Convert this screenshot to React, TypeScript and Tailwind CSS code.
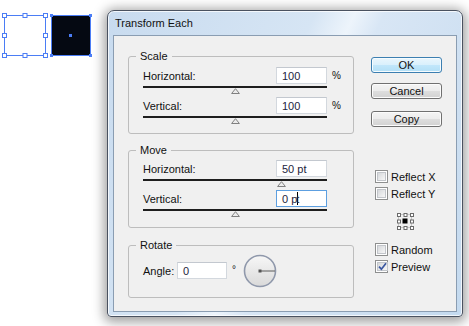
import React from "react";

function Input({
  w,
  children,
  focused,
}: {
  w: string;
  children: React.ReactNode;
  focused?: boolean;
}) {
  return (
    <div
      className={
        "h-[17px] bg-white border flex items-center pl-[5px] text-[#1d1d3d] " +
        w +
        (focused ? " border-[#5d9fe0]" : " border-[#d3d8de] border-t-[#c3c8cf]")
      }
    >
      {children}
    </div>
  );
}

function Slider({ pos }: { pos: number }) {
  return (
    <div className="relative w-[184px] h-[11px] mt-[2px]">
      <div className="h-[2px] bg-[#1e1e1e]" />
      <svg
        className="absolute top-[2px]"
        style={{ left: `${Math.round(pos * 184 - 4.5)}px` }}
        width="9"
        height="6"
        viewBox="0 0 9 6"
      >
        <path d="M4.5 0.7 L8.4 5.5 L0.6 5.5 Z" fill="#ececec" stroke="#808080" strokeWidth="1" />
      </svg>
    </div>
  );
}

function Field({
  label,
  value,
  unit,
  pos,
  focused,
}: {
  label: string;
  value: React.ReactNode;
  unit?: string;
  pos: number;
  focused?: boolean;
}) {
  return (
    <div>
      <div className="flex items-center h-[17px]">
        <span className="w-[133px]">{label}</span>
        <Input w="w-[51px]" focused={focused}>
          {value}
        </Input>
        {unit && <span className="ml-[5px] text-[10px]">{unit}</span>}
      </div>
      <Slider pos={pos} />
    </div>
  );
}

function Group({
  title,
  className,
  children,
}: {
  title: string;
  className: string;
  children: React.ReactNode;
}) {
  return (
    <div className={"relative border border-[#bdbdbd] rounded-[3px] w-[226px] pl-[14px] " + className}>
      <span className="absolute left-[7px] -top-[8px] px-[4px] bg-[#f0f0f0] leading-[14px]">{title}</span>
      {children}
    </div>
  );
}

function Button({ children, primary, className }: { children: React.ReactNode; primary?: boolean; className?: string }) {
  return (
    <div
      className={
        "w-[71px] h-[16px] rounded-[3px] border flex items-center justify-center leading-none " +
        (primary
          ? "border-[#3c7fb1] bg-[linear-gradient(#eaf6fd,#d9f0fc_50%,#c2e7fb_50%,#b2dff6)] shadow-[inset_0_0_0_1px_#f6fcff] "
          : "border-[#707070] bg-[linear-gradient(#f4f4f4,#ececec_50%,#dedede_50%,#d2d2d2)] shadow-[inset_0_0_0_1px_#fcfcfc] ") +
        (className || "")
      }
    >
      {children}
    </div>
  );
}

function Check({ label, checked, className }: { label: string; checked?: boolean; className?: string }) {
  return (
    <div className={"flex items-center h-[17px] pl-[4px] " + (className || "")}>
      <span className="w-[13px] h-[13px] border border-[#8e8f8f] bg-white p-[1px] flex">
        <span className="flex-1 border border-[#c2c5ca] bg-[linear-gradient(135deg,#d6d8db,#f7f7f7)] flex items-center justify-center">
          {checked && (
            <svg width="9" height="9" viewBox="0 0 9 9">
              <path d="M1 4.6 L3.4 7.2 L8 1.2" fill="none" stroke="#3b57a0" strokeWidth="1.7" />
            </svg>
          )}
        </span>
      </span>
      <span className="ml-[3px]">{label}</span>
    </div>
  );
}

function RefPoint() {
  const pts = [1, 7.5, 14];
  return (
    <svg width="18" height="18" viewBox="0 0 18 18">
      <rect x="2.5" y="2.5" width="13" height="13" fill="none" stroke="#9a9a9a" strokeDasharray="1 1" />
      {pts.map((x) =>
        pts.map((y) =>
          x === 7.5 && y === 7.5 ? (
            <rect key={`${x}-${y}`} x={6.5} y={6.5} width={5} height={5} fill="#000" />
          ) : (
            <rect
              key={`${x}-${y}`}
              x={x + 0.5}
              y={y + 0.5}
              width={3}
              height={3}
              fill="#fff"
              stroke="#6a6a6a"
            />
          )
        )
      )}
    </svg>
  );
}

function Dial() {
  return (
    <svg width="34" height="34" viewBox="0 0 34 34">
      <defs>
        <linearGradient id="dg" x1="0" y1="0" x2="0" y2="1">
          <stop offset="0" stopColor="#f7f7f7" />
          <stop offset="1" stopColor="#d9d9d9" />
        </linearGradient>
      </defs>
      <circle cx="17" cy="17" r="15.5" fill="url(#dg)" stroke="#8f98ab" strokeWidth="1.6" />
      <line x1="17" y1="17" x2="32" y2="17" stroke="#5a5a5a" strokeWidth="1" />
      <rect x="15.5" y="15.5" width="3" height="3" fill="#555" />
    </svg>
  );
}

function Art() {
  const blue = "#4b7df5";
  const hx = [4.5, 25, 45.5];
  const hy = [15.5, 35.5, 55.5];
  return (
    <svg className="absolute left-0 top-0" width="100" height="70" viewBox="0 0 100 70">
      <rect x="4.5" y="15.5" width="41" height="40" fill="#fff" stroke={blue} />
      {hx.map((x) =>
        hy.map((y) =>
          x === 25 && y === 35.5 ? null : (
            <rect key={`${x}-${y}`} x={x - 2} y={y - 2} width="4" height="4" fill="#fff" stroke={blue} />
          )
        )
      )}
      <rect x="51.5" y="15.5" width="39" height="40" fill="#050912" stroke={blue} />
      {[
        [51.5, 15.5],
        [90.5, 15.5],
        [51.5, 55.5],
        [90.5, 55.5],
      ].map(([x, y]) => (
        <rect key={`${x}-${y}`} x={x - 1.5} y={y - 1.5} width="3" height="3" fill={blue} />
      ))}
      <rect x="69" y="34" width="3" height="3" fill={blue} />
    </svg>
  );
}

export default function App() {
  return (
    <div className="relative w-[469px] h-[326px] bg-white overflow-hidden font-['Liberation_Sans',Arial,sans-serif] text-[11px] leading-[14px] text-[#111]">
      <Art />
      <div className="absolute left-[107px] top-[10px] w-[356px] h-[307px] rounded-t-[7px] rounded-b-[4px] border border-[#4a5260] flex flex-col px-[5px] pb-[4px] bg-[linear-gradient(115deg,#c8dbef_0%,#d6e5f4_42%,#edf4fb_50%,#d8e6f5_56%,#cddff1_80%,#c4daef_100%)] shadow-[0_2px_12px_3px_rgba(0,0,0,0.38),inset_0_0_0_1px_rgba(255,255,255,0.75)]">
        <div className="h-[24px] flex items-center pl-[2px] text-[11px] text-[#111]">Transform Each</div>
        <div className="flex-1 border border-[#8a9db2] bg-[#f0f0f0] flex pl-[14px]">
          <div className="flex flex-col">
            <Group title="Scale" className="mt-[20px] pt-[10px] pb-[6px]">
              <Field label="Horizontal:" value="100" unit="%" pos={0.5} />
              <Field label="Vertical:" value="100" unit="%" pos={0.5} />
            </Group>
            <Group title="Move" className="mt-[16px] pt-[9px] pb-[7px]">
              <Field label="Horizontal:" value="50 pt" pos={0.75} />
              <Field
                label="Vertical:"
                focused
                value={
                  <span className="flex items-center">
                    0 p
                    <span className="inline-block w-px h-[13px] bg-black -mr-[2px]" />
                    t
                  </span>
                }
                pos={0.5}
              />
            </Group>
            <Group title="Rotate" className="mt-[17px] pt-[8px] pb-[10px]">
              <div className="flex items-center h-[33px]">
                <span className="w-[34px]">Angle:</span>
                <Input w="w-[50px]">0</Input>
                <span className="self-start mt-[9px] ml-[5px] w-[11px] text-[10px]">°</span>
                <Dial />
              </div>
            </Group>
          </div>
          <div className="flex flex-col ml-[17px]">
            <Button primary className="mt-[21px]">
              OK
            </Button>
            <Button className="mt-[10px]">Cancel</Button>
            <Button className="mt-[12px]">Copy</Button>
            <Check label="Reflect X" className="mt-[41px]" />
            <Check label="Reflect Y" />
            <div className="mt-[10px] pl-[25px] h-[18px]">
              <RefPoint />
            </div>
            <Check label="Random" className="mt-[11px]" />
            <Check label="Preview" checked />
          </div>
        </div>
      </div>
    </div>
  );
}
